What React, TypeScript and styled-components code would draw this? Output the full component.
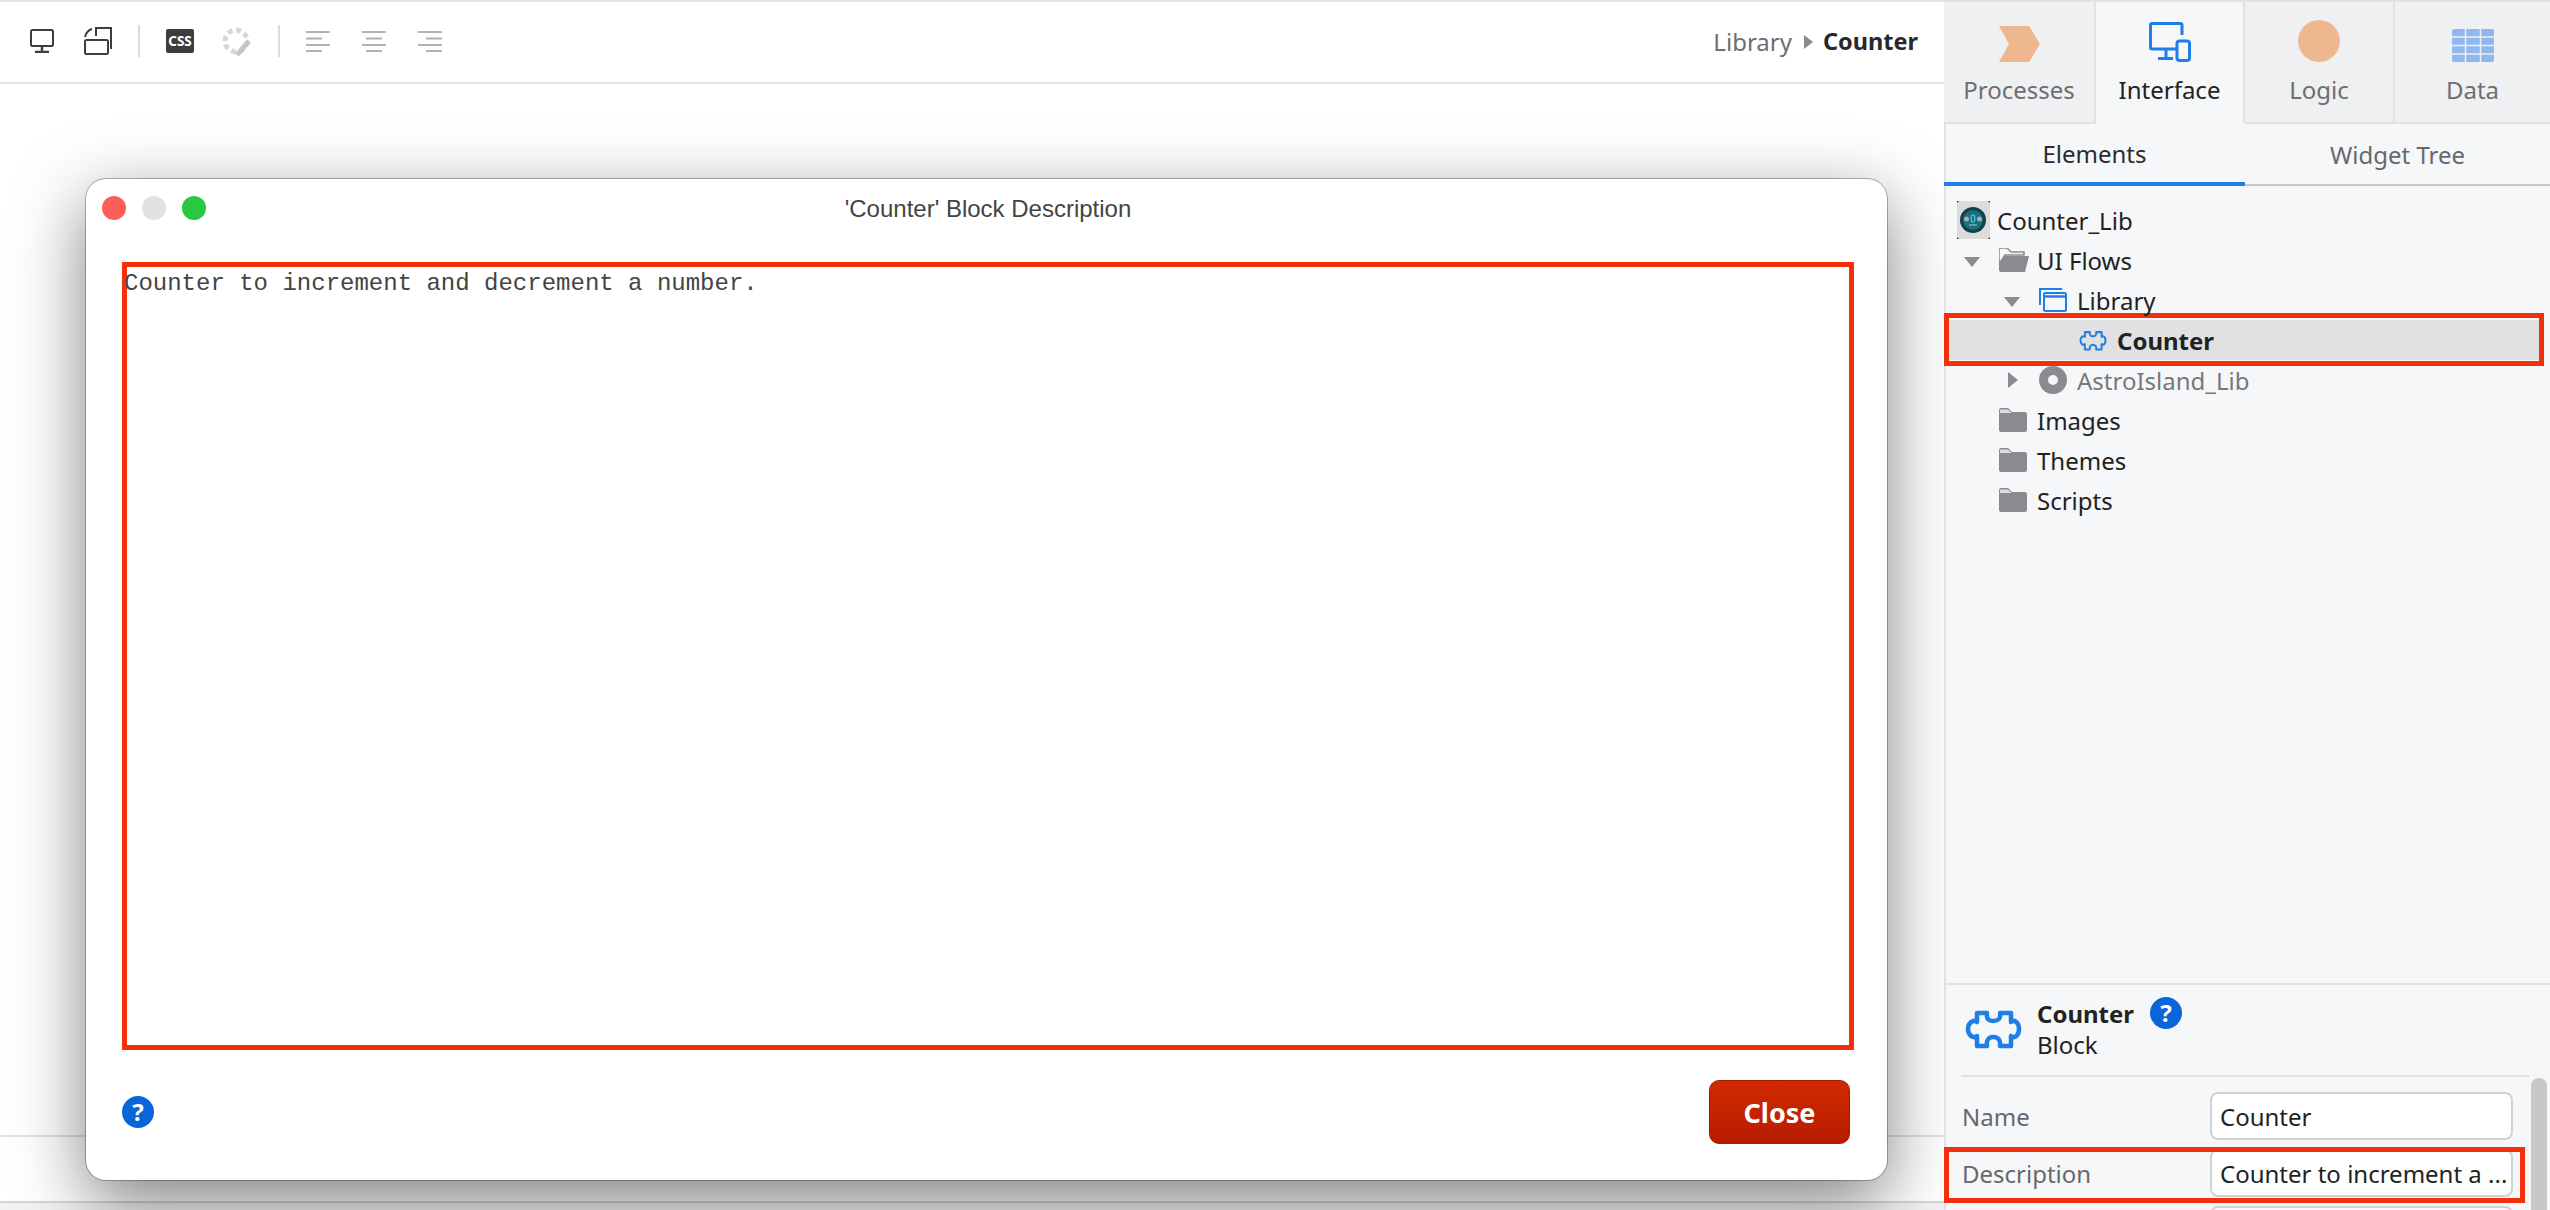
import styled, { createGlobalStyle } from 'styled-components'

const GlobalStyle = createGlobalStyle`
  html, body { margin: 0; padding: 0; height: 100%; overflow: hidden; }
  body { font-family: "Noto Sans", "Open Sans", sans-serif; color: #222; }
`

const BLUE = '#1f7fe6'
const GREY = '#8a8b8e'

function PuzzleIcon({ w, h, sw }: { w: number; h: number; sw: number }) {
  return (
    <svg width={w} height={h} viewBox="0 0 57 40" preserveAspectRatio="none">
      <path
        d="M12 4H22C21 10 24 12 28 12C33 12 36 10 35 4H46V13C50 10 54 14 54 20C54 26 50 30 46 27V37H35C36 31 33 28 28 28C24 28 21 31 22 37H12V27C8 30 3 26 3 20C3 14 8 10 12 13Z"
        fill="none" stroke={BLUE} strokeWidth={sw} strokeLinejoin="round"
      />
    </svg>
  )
}

function FolderIcon() {
  return (
    <svg width="28" height="24" viewBox="0 0 28 24">
      <path d="M0 2C0 1 1 0 2 0H9L13 4H26C27 4 28 5 28 6V22C28 23 27 24 26 24H2C1 24 0 23 0 22Z" fill={GREY} />
      <path d="M1 1.500H9L12.500 5H1Z" fill="#f5f7f9" opacity=".75" />
    </svg>
  )
}

function OpenFolderIcon() {
  return (
    <svg width="30" height="24" viewBox="0 0 30 24">
      <path d="M0 1.500C0 .5 1 0 2 0H8L12 4H25V7H6L0 16Z" fill="none" stroke={GREY} strokeWidth="1.500" />
      <path d="M5 8H30L26 24H2C1 24 0 23 0 22V15Z" fill={GREY} />
    </svg>
  )
}

function FlowIcon() {
  return (
    <svg width="28" height="24" viewBox="0 0 28 24">
      <path d="M1 17V1H23" fill="none" stroke={BLUE} strokeWidth="2" />
      <rect x="5" y="5" width="22" height="18" rx="1.500" fill="none" stroke={BLUE} strokeWidth="2" />
      <path d="M5 8.500H27" stroke={BLUE} strokeWidth="2.500" />
    </svg>
  )
}

function RingIcon() {
  return (
    <svg width="28" height="28" viewBox="0 0 28 28">
      <circle cx="14" cy="14" r="9.500" fill="none" stroke={GREY} strokeWidth="9" />
    </svg>
  )
}

function LibIcon() {
  return (
    <svg width="33" height="38" viewBox="0 0 33 38">
      <rect width="33" height="38" fill="#dcdcdc" />
      <path d="M0 2V0H2M31 0H33V2M0 36V38H2M33 36V38H31" fill="none" stroke="#111" strokeWidth="1" />
      <circle cx="16" cy="19" r="13" fill="#123f4a" />
      <circle cx="16" cy="19" r="10" fill="#1d6e7c" />
      <circle cx="9.500" cy="18" r="2.500" fill="#9fb1b5" />
      <circle cx="22.500" cy="18" r="2.500" fill="#9fb1b5" />
      <rect x="14.300" y="14" width="3.400" height="7" rx="1.500" fill="none" stroke="#37d7ee" strokeWidth="1.200" />
      <path d="M12 24H20" stroke="#a9c5ca" strokeWidth="1" />
    </svg>
  )
}

function AlignIcon({ side }: { side: 'left' | 'center' | 'right' }) {
  const x = side === 'left' ? 0 : side === 'center' ? 4 : 8
  return (
    <svg width="24" height="21" viewBox="0 0 24 21">
      <path d={`M0 1H24M${x} 7.500H${x + 16}M0 14H24M${x} 20H${x + 16}`} stroke="#b2b2b2" strokeWidth="2" />
    </svg>
  )
}

const tree = [
  { id: 'root', indent: 13, icon: <LibIcon />, slot: 40, label: 'Counter_Lib' },
  { id: 'flows', indent: 20, caret: 'down', icon: <OpenFolderIcon />, label: 'UI Flows' },
  { id: 'library', indent: 60, caret: 'down', icon: <FlowIcon />, label: 'Library' },
  { id: 'counter', indent: 100, icon: <PuzzleIcon w={28} h={21} sw={4} />, label: 'Counter', selected: true },
  { id: 'astro', indent: 60, caret: 'right', icon: <RingIcon />, label: 'AstroIsland_Lib', muted: true },
  { id: 'images', indent: 20, icon: <FolderIcon />, label: 'Images' },
  { id: 'themes', indent: 20, icon: <FolderIcon />, label: 'Themes' },
  { id: 'scripts', indent: 20, icon: <FolderIcon />, label: 'Scripts' },
]

export default function App() {
  return (
    <Page>
      <GlobalStyle />
      <Workspace>
        <Toolbar>
          <ToolGroup $gap={30}>
            <svg width="24" height="24" viewBox="0 0 24 24">
              <rect x="1" y="1" width="22" height="16" rx="1.500" fill="none" stroke="#3d3d3d" strokeWidth="2" />
              <path d="M12 17V22M5 23H19" stroke="#3d3d3d" strokeWidth="2.500" />
            </svg>
            <svg width="28" height="28" viewBox="0 0 28 28">
              <rect x="1" y="13" width="23" height="14" rx="1.500" fill="none" stroke="#3d3d3d" strokeWidth="2" />
              <path d="M12 9V1H27V22M1 10C2 6 4 3 8 2" fill="none" stroke="#3d3d3d" strokeWidth="2" />
            </svg>
          </ToolGroup>
          <ToolSep />
          <ToolGroup $gap={28}>
            <CssBadge>CSS</CssBadge>
            <svg width="30" height="30" viewBox="0 0 30 30">
              <circle cx="14" cy="15" r="11" fill="none" stroke="#d6d6d6" strokeWidth="5" strokeDasharray="5 3.600" />
              <path d="M15 29L27 15" stroke="#c6c6c6" strokeWidth="5" />
            </svg>
          </ToolGroup>
          <ToolSep />
          <ToolGroup $gap={32}>
            <AlignIcon side="left" />
            <AlignIcon side="center" />
            <AlignIcon side="right" />
          </ToolGroup>
          <Crumbs>
            <CrumbLink>Library</CrumbLink>
            <CrumbArrow />
            <CrumbCurrent>Counter</CrumbCurrent>
          </Crumbs>
        </Toolbar>
        <Canvas />
        <BottomBar />
        <BottomStrip />

        <Dialog>
          <TitleBar>
            <Lights>
              <Light $color="#fd5f58" />
              <Light $color="#e2e2e2" />
              <Light $color="#28c840" />
            </Lights>
            <DialogTitle>'Counter' Block Description</DialogTitle>
          </TitleBar>
          <DescriptionBox>
            <DescriptionText>Counter to increment and decrement a number.</DescriptionText>
          </DescriptionBox>
          <DialogFooter>
            <HelpBadge>?</HelpBadge>
            <CloseButton>Close</CloseButton>
          </DialogFooter>
        </Dialog>
      </Workspace>

      <Sidebar>
        <MainTabs>
          <MainTab>
            <svg width="41" height="36" viewBox="0 0 41 36"><path d="M0 0H30L41 18L30 36H0L10 18Z" fill="#efb78f" /></svg>
            Processes
          </MainTab>
          <MainTab $active>
            <svg width="42" height="40" viewBox="0 0 42 40">
              <path d="M33 13V3C33 2 32 1.500 31 1.500H3C2 1.500 1.500 2 1.500 3V25C1.500 26 2 27 3 27H27" fill="none" stroke={BLUE} strokeWidth="3" />
              <path d="M17 27V35M9 36.500H24" stroke={BLUE} strokeWidth="3" />
              <rect x="28" y="19" width="12.500" height="19.500" rx="2.500" fill="#f5f7f9" stroke={BLUE} strokeWidth="3" />
            </svg>
            Interface
          </MainTab>
          <MainTab>
            <svg width="42" height="42" viewBox="0 0 42 42"><circle cx="21" cy="21" r="21" fill="#efb78f" /></svg>
            Logic
          </MainTab>
          <MainTab $last>
            <svg width="42" height="33" viewBox="0 0 42 33">
              <path d="M2 0H40C41 0 42 1 42 2V31C42 32 41 33 40 33H2C1 33 0 32 0 31V2C0 1 1 0 2 0Z" fill="#8fb8ee" />
              <path d="M13.500 0V33M28.500 0V33M0 8H42M0 16.500H42M0 25H42" stroke="#eef0f2" strokeWidth="1.500" />
            </svg>
            Data
          </MainTab>
        </MainTabs>

        <SubTabs>
          <SubTab $active>Elements</SubTab>
          <SubTab>Widget Tree</SubTab>
        </SubTabs>

        <Tree>
          {tree.map(node => (
            <TreeRow key={node.id} $indent={node.indent} $selected={node.selected}>
              {node.id !== 'root' && (
                <CaretSlot>
                  {node.caret === 'down' && <CaretDown />}
                  {node.caret === 'right' && <CaretRight />}
                </CaretSlot>
              )}
              <IconSlot $width={node.slot ?? 38}>{node.icon}</IconSlot>
              <TreeLabel $selected={node.selected} $muted={node.muted}>{node.label}</TreeLabel>
            </TreeRow>
          ))}
        </Tree>

        <Details>
          <DetailsHeader>
            <PuzzleIcon w={57} h={40} sw={4.500} />
            <div>
              <DetailsTitle>
                Counter
                <HelpBadge>?</HelpBadge>
              </DetailsTitle>
              <DetailsType>Block</DetailsType>
            </div>
          </DetailsHeader>
          <Props>
            <ScrollThumb />
            <PropRow>
              <PropLabel>Name</PropLabel>
              <PropInput>Counter</PropInput>
            </PropRow>
            <PropRow $marked>
              <PropLabel>Description</PropLabel>
              <PropInput>Counter to increment a ...</PropInput>
            </PropRow>
            <PropRow>
              <PropLabel />
              <PropInput />
            </PropRow>
          </Props>
        </Details>
      </Sidebar>
    </Page>
  )
}

const Page = styled.div`
  display: grid;
  grid-template-columns: 1944px 606px;
  width: 2550px;
  height: 1210px;
  overflow: hidden;
  background: #fff;
`

const Workspace = styled.div`
  position: relative;
  display: flex;
  flex-direction: column;
  min-width: 0;
  background: #fff;
`

const Toolbar = styled.div`
  display: flex;
  align-items: center;
  gap: 26px;
  height: 84px;
  box-sizing: border-box;
  padding: 0 26px 2px 30px;
  border-top: 2px solid #e2e2e2;
  border-bottom: 2px solid #e2e2e2;
`

const ToolGroup = styled.div<{ $gap: number }>`
  display: flex;
  align-items: center;
  gap: ${p => p.$gap}px;
`

const ToolSep = styled.div`
  width: 2px;
  height: 32px;
  background: #dcdcdc;
`

const CssBadge = styled.div`
  width: 28px;
  height: 24px;
  border-radius: 2px;
  background: #3d3d3d;
  color: #fff;
  font-size: 13.500px;
  font-weight: 700;
  line-height: 24px;
  text-align: center;
`

const Crumbs = styled.div`
  display: flex;
  align-items: center;
  margin-left: auto;
  font-size: 24px;
`

const CrumbLink = styled.span`
  color: #6d6e71;
`

const CrumbArrow = styled.span`
  width: 0;
  height: 0;
  margin: 2px 10px 0 12px;
  border-left: 9px solid #8a8b8e;
  border-top: 7px solid transparent;
  border-bottom: 7px solid transparent;
`

const CrumbCurrent = styled.span`
  color: #26282b;
  font-size: 23.500px;
  font-weight: 700;
`

const Canvas = styled.div`
  flex: 1;
  border-bottom: 2px solid #e2e2e2;
`

const BottomBar = styled.div`
  height: 64px;
  flex: none;
`

const BottomStrip = styled.div`
  height: 9px;
  flex: none;
  box-sizing: border-box;
  border-top: 2px solid #d4d6d8;
  background: #f0f2f4;
`

const Dialog = styled.div`
  position: absolute;
  left: 86px;
  top: 179px;
  display: flex;
  flex-direction: column;
  width: 1801px;
  height: 1001px;
  box-sizing: border-box;
  padding: 0 33px 0 36px;
  border-radius: 20px;
  background: #fff;
  box-shadow: 0 0 0 1px rgba(0, 0, 0, .28), 0 22px 70px rgba(0, 0, 0, .5);
`

const TitleBar = styled.div`
  position: relative;
  display: flex;
  align-items: center;
  justify-content: center;
  height: 83px;
  flex: none;
  padding-bottom: 23px;
  box-sizing: border-box;
`

const Lights = styled.div`
  position: absolute;
  left: -20px;
  top: 17px;
  display: flex;
  gap: 16px;
`

const Light = styled.span<{ $color: string }>`
  width: 24px;
  height: 24px;
  border-radius: 50%;
  background: ${p => p.$color};
`

const DialogTitle = styled.div`
  color: #444;
  font-family: "Liberation Sans", Arial, sans-serif;
  font-size: 24px;
`

const DescriptionBox = styled.div`
  height: 788px;
  flex: none;
  box-sizing: border-box;
  border: 5px solid #f3300c;
`

const DescriptionText = styled.p`
  position: relative;
  margin: 2px 0 0 -3px;
  color: #444;
  font-family: "Liberation Mono", "Courier New", monospace;
  font-size: 24px;
  line-height: 30px;
`

const DialogFooter = styled.div`
  display: flex;
  align-items: center;
  justify-content: space-between;
  height: 64px;
  margin-top: 30px;
  padding-right: 4px;
`

const HelpBadge = styled.span`
  display: inline-flex;
  align-items: center;
  justify-content: center;
  width: 32px;
  height: 32px;
  border-radius: 50%;
  background: #0a66d8;
  color: #fff;
  font-size: 24px;
  font-weight: 700;
  line-height: 1;
`

const CloseButton = styled.button`
  width: 141px;
  height: 64px;
  padding: 0;
  border: 1px solid #a81a00;
  border-radius: 10px;
  background: linear-gradient(#d02a00, #b81c00);
  color: #fff;
  font-family: inherit;
  font-size: 27px;
  font-weight: 700;
`

const Sidebar = styled.aside`
  position: relative;
  z-index: 2;
  display: flex;
  flex-direction: column;
  min-height: 0;
  background: #f5f7f9;
  box-shadow: inset 2px 0 0 #e2e2e2;
`

const MainTabs = styled.div`
  display: grid;
  grid-template-columns: 152px 149px 150px 155px;
  height: 124px;
  flex: none;
  box-sizing: border-box;
  border-top: 2px solid #e2e2e2;
`

const MainTab = styled.div<{ $active?: boolean; $last?: boolean }>`
  display: flex;
  flex-direction: column;
  align-items: center;
  justify-content: flex-end;
  gap: 11px;
  padding-bottom: 16px;
  box-sizing: border-box;
  background: ${p => (p.$active ? '#f5f7f9' : '#eef0f2')};
  border-bottom: ${p => (p.$active ? '2px solid transparent' : '2px solid #e2e2e2')};
  border-right: ${p => (p.$last ? 'none' : '2px solid #e2e2e2')};
  color: ${p => (p.$active ? '#222' : '#6d6e71')};
  font-size: 24px;
  line-height: 33px;
`

const SubTabs = styled.div`
  display: grid;
  grid-template-columns: 301px 305px;
  height: 62px;
  flex: none;
`

const SubTab = styled.div<{ $active?: boolean }>`
  display: flex;
  align-items: center;
  justify-content: center;
  border-bottom: ${p => (p.$active ? `4px solid ${BLUE}` : '2px solid #c8c8c8')};
  box-sizing: border-box;
  color: ${p => (p.$active ? '#2a2c2f' : '#66686b')};
  font-size: 24px;
`

const Tree = styled.div`
  flex: 1;
  padding-top: 14px;
`

const TreeRow = styled.div<{ $indent: number; $selected?: boolean }>`
  position: relative;
  display: flex;
  align-items: center;
  height: 40px;
  padding-left: ${p => p.$indent}px;
  margin-right: 6px;
  background: ${p => (p.$selected ? '#dfe1e3' : 'transparent')};
  ${p => p.$selected && `
    &::after {
      content: "";
      position: absolute;
      inset: -7px 0 -6px 0;
      border: 5px solid #f3300c;
    }
  `}
`

const CaretSlot = styled.span`
  display: flex;
  align-items: center;
  width: 35px;
  flex: none;
`

const CaretDown = styled.span`
  margin-top: 4px;
  border-top: 10px solid ${GREY};
  border-left: 8px solid transparent;
  border-right: 8px solid transparent;
`

const CaretRight = styled.span`
  margin-left: 4px;
  border-left: 10px solid ${GREY};
  border-top: 8px solid transparent;
  border-bottom: 8px solid transparent;
`

const IconSlot = styled.span<{ $width: number }>`
  display: flex;
  align-items: center;
  width: ${p => p.$width}px;
  flex: none;
`

const TreeLabel = styled.span<{ $selected?: boolean; $muted?: boolean }>`
  position: relative;
  z-index: 1;
  color: ${p => (p.$muted ? '#77787c' : '#222')};
  font-size: 24px;
  font-weight: ${p => (p.$selected ? 700 : 400)};
  line-height: 33px;
`

const Details = styled.div`
  height: 227px;
  flex: none;
  box-sizing: border-box;
  border-top: 2px solid #e2e2e2;
  overflow: hidden;
`

const DetailsHeader = styled.div`
  display: flex;
  align-items: center;
  gap: 15px;
  height: 92px;
  box-sizing: border-box;
  margin: 0 21px 0 17px;
  padding: 0 0 3px 4px;
  border-bottom: 2px solid #e2e2e2;
`

const DetailsTitle = styled.div`
  display: flex;
  align-items: center;
  gap: 16px;
  color: #222;
  font-size: 24px;
  font-weight: 700;
  line-height: 31px;
`

const DetailsType = styled.div`
  color: #222;
  font-size: 24px;
  line-height: 31px;
`

const Props = styled.div`
  position: relative;
  display: flex;
  flex-direction: column;
  gap: 9px;
  padding: 15px 37px 0 18px;
`

const ScrollThumb = styled.div`
  position: absolute;
  right: 3px;
  top: 1px;
  width: 16px;
  height: 200px;
  border-radius: 8px 8px 0 0;
  background: #c6c8ca;
`

const PropRow = styled.div<{ $marked?: boolean }>`
  position: relative;
  display: grid;
  grid-template-columns: 248px 303px;
  align-items: center;
  height: 48px;
  ${p => p.$marked && `
    &::after {
      content: "";
      position: absolute;
      inset: -2px -12px -6px -18px;
      border: 5px solid #f3300c;
      pointer-events: none;
    }
  `}
`

const PropLabel = styled.span`
  color: #66686b;
  font-size: 24px;
`

const PropInput = styled.div`
  height: 48px;
  box-sizing: border-box;
  padding: 0 8px;
  border: 2px solid #cfd1d3;
  border-radius: 8px;
  background: #fff;
  color: #222;
  font-size: 24px;
  line-height: 46px;
  white-space: nowrap;
  overflow: hidden;
`
